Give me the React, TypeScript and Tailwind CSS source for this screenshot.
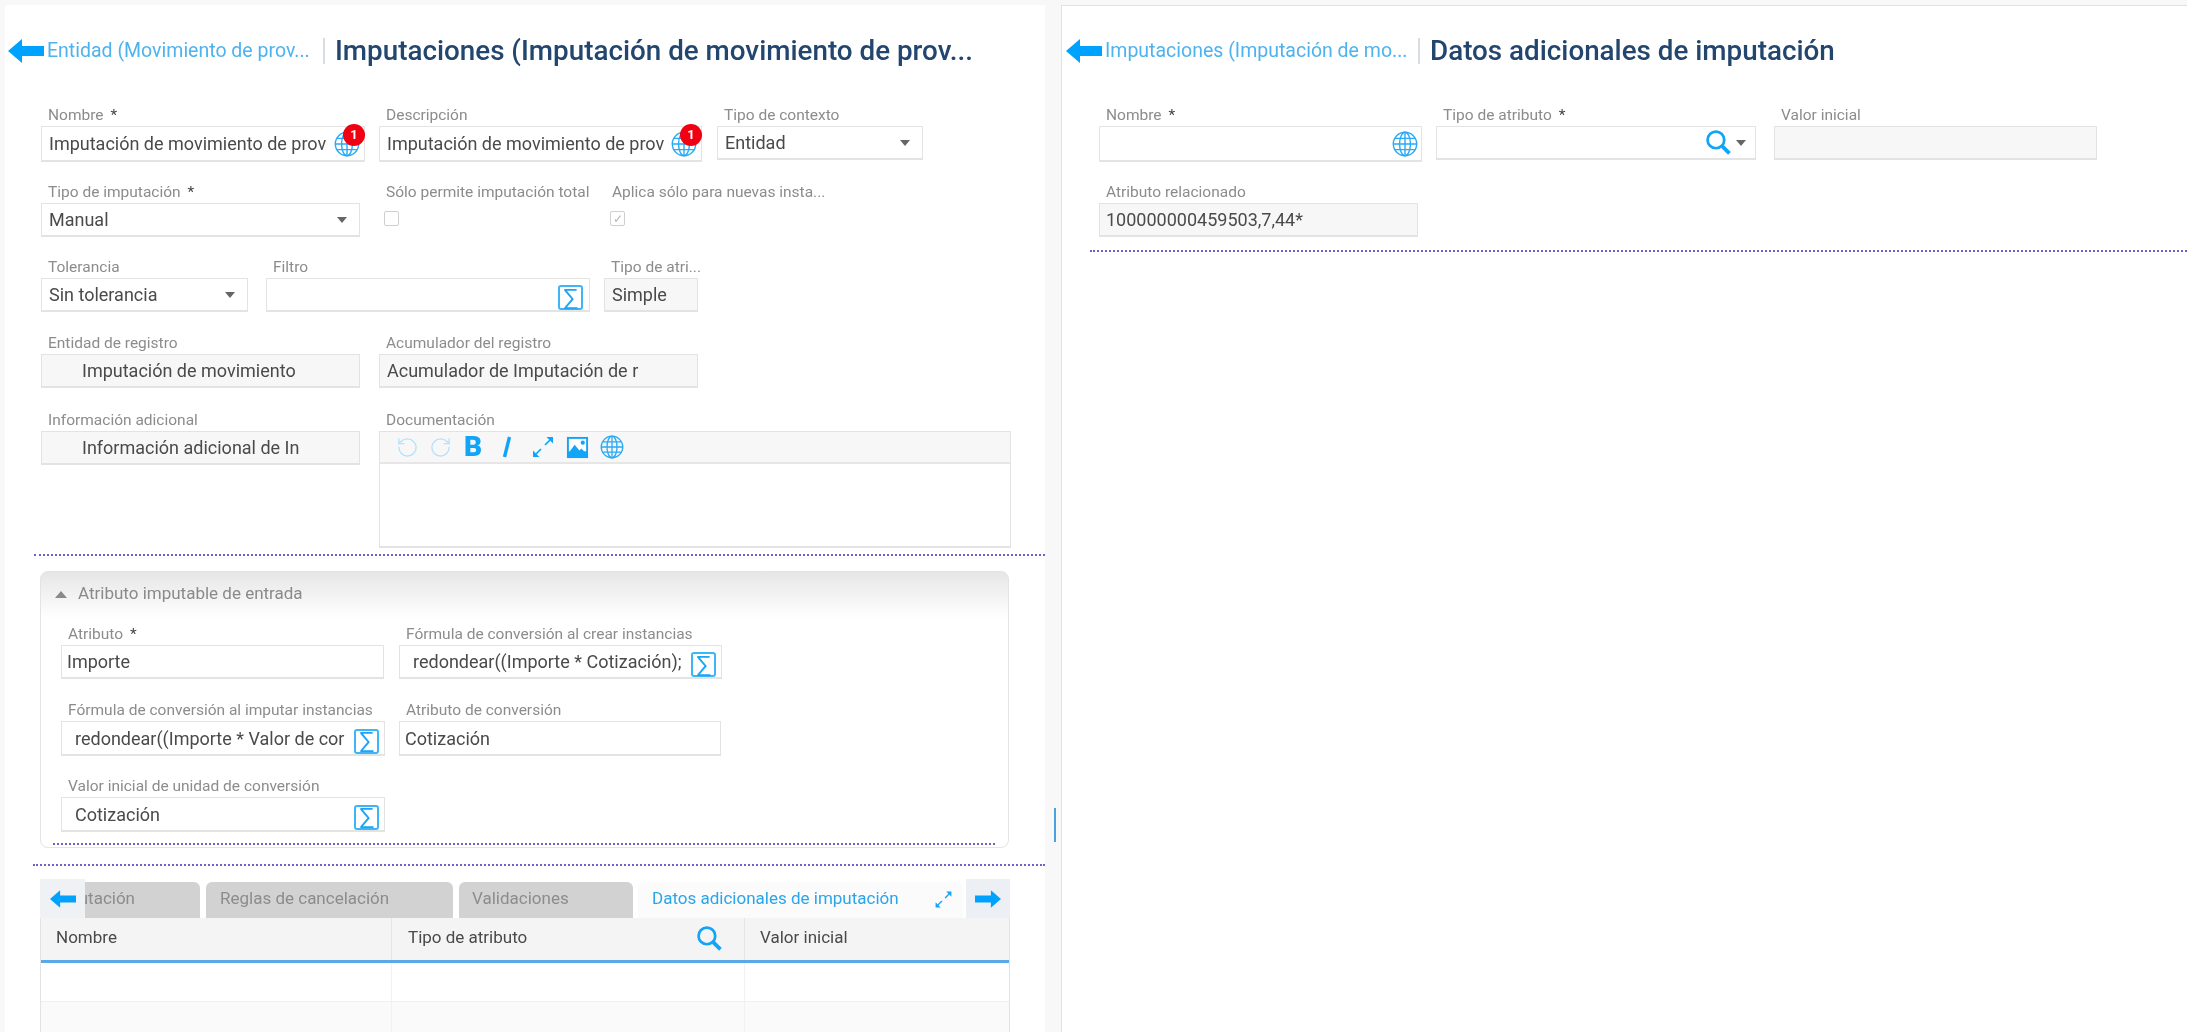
import { RotateCcw, RotateCw } from 'lucide-react';
import type { ReactNode } from 'react';

function BackArrow({ className }: { className: string }) {
  return (
    <svg viewBox="0 0 36 24" className={className} fill="#00a2ff">
      <path d="M0 12 L14 0 V7 H36 V17 H14 V24 Z" />
    </svg>
  );
}

function Globe({ className }: { className: string }) {
  return (
    <svg viewBox="0 0 24 24" className={className} fill="none" stroke="#2aaaf5" strokeWidth="1.3">
      <circle cx="12" cy="12" r="10.8" />
      <ellipse cx="12" cy="12" rx="5" ry="10.8" />
      <path d="M12 1.2 V22.8 M1.2 12 H22.8 M2.8 6.8 H21.2 M2.8 17.2 H21.2" />
    </svg>
  );
}

function Expand({ className }: { className: string }) {
  return (
    <svg viewBox="0 0 24 24" className={className} fill="#12a5f7" stroke="#12a5f7" strokeWidth="1.7">
      <path d="M5 19 L10 14 M14 10 L19 5" fill="none" />
      <path d="M15.5 2 H22 V8.5 Z M2 15.5 V22 H8.5 Z" stroke="none" />
    </svg>
  );
}

function Picture({ className }: { className: string }) {
  return (
    <svg viewBox="0 0 24 24" className={className}>
      <rect x="1" y="1" width="22" height="22" fill="#12a5f7" />
      <rect x="3" y="3" width="18" height="13" fill="#fff" />
      <circle cx="17.5" cy="7" r="2.2" fill="#12a5f7" />
      <path d="M1 20 L9 9 L14 15 L16 13 L23 20 V23 H1 Z" fill="#12a5f7" />
    </svg>
  );
}

function SearchIcon({ className }: { className: string }) {
  return (
    <svg viewBox="0 0 24 24" className={className} fill="none" stroke="#12a5f7">
      <circle cx="9.5" cy="9.5" r="8" strokeWidth="2.6" />
      <path d="M15.5 15.5 L22.5 22.5" strokeWidth="3.6" />
    </svg>
  );
}

function SigmaBtn({ className = '' }: { className?: string }) {
  return (
    <span className={`flex h-[25px] w-[25px] shrink-0 items-center justify-center rounded-[3px] border-2 border-[#3fb4f7] bg-white text-[24px] leading-none text-[#1ba6f5] ${className}`}>
      ∑
    </span>
  );
}

function Badge() {
  return (
    <span className="absolute right-[-1px] top-[-3px] flex h-[22px] w-[22px] items-center justify-center rounded-full bg-[#f00010] text-[13px] font-bold text-white">
      1
    </span>
  );
}

function Caret() {
  return <span className="h-0 w-0 border-x-[5px] border-t-[6px] border-x-transparent border-t-[#666]" />;
}

interface FieldProps {
  label: string;
  required?: boolean;
  width: string;
  boxClass?: string;
  readOnly?: boolean;
  textClass?: string;
  value?: string;
  children?: ReactNode;
}

function Field({ label, required, width, boxClass = 'h-[34px]', readOnly, textClass = 'pl-[7px]', value, children }: FieldProps) {
  return (
    <div className={`${width} shrink-0`}>
      <div className="h-[21px] whitespace-nowrap pl-[7px] text-[15.5px] leading-[20px] text-[#8c8c8c]">
        {label}
        {required && <span className="ml-[7px] text-[#444]">*</span>}
      </div>
      <div className={`relative flex items-center border border-[#e3e3e3] border-b-2 ${readOnly ? 'bg-[#f7f7f7]' : 'bg-white'} ${boxClass}`}>
        <div className={`min-w-0 flex-1 overflow-hidden whitespace-nowrap text-[18px] text-[#4a4a4a] ${textClass}`}>{value}</div>
        {children}
      </div>
    </div>
  );
}

function Select(props: FieldProps) {
  return (
    <Field {...props}>
      <span className="mr-[12px] flex shrink-0">
        <Caret />
      </span>
    </Field>
  );
}

function CheckField({ label, width, checked }: { label: string; width: string; checked?: boolean }) {
  return (
    <div className={`${width} shrink-0`}>
      <div className="h-[21px] whitespace-nowrap pl-[7px] text-[15.5px] leading-[20px] text-[#8c8c8c]">{label}</div>
      <div className="ml-[5px] mt-[8px] flex h-[15px] w-[15px] items-center justify-center rounded-[2px] border border-[#cfcfcf] bg-white text-[12px] leading-none text-[#b5b5b5]">
        {checked ? '✓' : ''}
      </div>
    </div>
  );
}

function PageHeader({ link, title, linkWidth }: { link: string; title: string; linkWidth: string }) {
  return (
    <div className="flex h-[40px] items-center">
      <BackArrow className="h-[24px] w-[36px] shrink-0" />
      <span className={`ml-[3px] whitespace-nowrap text-[19.5px] text-[#4db2ee] ${linkWidth}`}>{link}</span>
      <span className="mx-[10px] h-[26px] w-[2px] shrink-0 bg-[#d8dde3]" />
      <span className="whitespace-nowrap text-[27.8px] font-medium text-[#22466e]">{title}</span>
    </div>
  );
}

const dotted = 'h-0 border-t-[2px] border-dotted border-[#6a62c4]';

export default function App() {
  return (
    <div className="flex h-[1032px] w-[2187px] overflow-hidden bg-[#f8f8f8] pt-[5px] font-['Roboto',sans-serif] blur-[0.4px]">
      {/* Panel izquierdo */}
      <div className="ml-[5px] h-full w-[1040px] shrink-0 bg-white">
        <div className="mt-[26px] pl-[3px]">
          <PageHeader link="Entidad (Movimiento de prov..." title="Imputaciones (Imputación de movimiento de prov..." linkWidth="w-[266px]" />
        </div>

        <div className="mt-[34px] pl-[36px]">
          <div className="flex">
            <Field label="Nombre" required width="w-[324px]" boxClass="h-[36px]" value="Imputación de movimiento de prov">
              <Globe className="mr-[4px] h-[26px] w-[26px] shrink-0" />
              <Badge />
            </Field>
            <Field label="Descripción" width="ml-[14px] w-[323px]" boxClass="h-[36px]" value="Imputación de movimiento de prov">
              <Globe className="mr-[4px] h-[26px] w-[26px] shrink-0" />
              <Badge />
            </Field>
            <Select label="Tipo de contexto" width="ml-[15px] w-[206px]" value="Entidad" />
          </div>

          <div className="mt-[20px] flex">
            <Select label="Tipo de imputación" required width="w-[319px]" value="Manual" />
            <CheckField label="Sólo permite imputación total" width="ml-[19px] w-[226px]" />
            <CheckField label="Aplica sólo para nuevas insta..." width="w-[222px]" checked />
          </div>

          <div className="mt-[20px] flex">
            <Select label="Tolerancia" width="w-[207px]" value="Sin tolerancia" />
            <Field label="Filtro" width="ml-[18px] w-[324px]">
              <SigmaBtn className="mr-[6px] mt-[6px]" />
            </Field>
            <Field label="Tipo de atri..." width="ml-[14px] w-[94px]" readOnly value="Simple" />
          </div>

          <div className="mt-[21px] flex">
            <Field label="Entidad de registro" width="w-[319px]" readOnly textClass="pl-[40px] pr-[40px]" value="Imputación de movimiento" />
            <Field label="Acumulador del registro" width="ml-[19px] w-[319px]" readOnly textClass="pl-[7px] pr-[40px]" value="Acumulador de Imputación de r" />
          </div>

          <div className="mt-[22px] flex">
            <Field label="Información adicional" width="w-[319px]" readOnly textClass="pl-[40px] pr-[40px]" value="Información adicional de In" />
            <div className="ml-[19px] w-[632px] shrink-0">
              <div className="h-[21px] pl-[7px] text-[15.5px] leading-[20px] text-[#8c8c8c]">Documentación</div>
              <div className="h-[117px] border border-[#e3e3e3] border-b-2 bg-white">
                <div className="flex h-[32px] items-center border-b-2 border-[#e6e6e6] bg-[#f7f7f7] pl-[16px]">
                  <RotateCcw size={23} strokeWidth={1.4} className="text-[#b5e1fb]" />
                  <RotateCw size={23} strokeWidth={1.4} className="ml-[10px] text-[#b5e1fb]" />
                  <span className="ml-[12px] w-[20px] text-[28px] font-black leading-none text-[#12a5f7]">B</span>
                  <svg viewBox="0 0 10 22" className="ml-[18px] h-[22px] w-[10px]" stroke="#12a5f7" strokeWidth="3.4">
                    <path d="M7.5 1 L2.5 21" />
                  </svg>
                  <Expand className="ml-[19px] h-[24px] w-[24px]" />
                  <Picture className="ml-[11px] h-[23px] w-[23px]" />
                  <Globe className="ml-[11px] h-[24px] w-[24px]" />
                </div>
              </div>
            </div>
          </div>
        </div>

        <div className={`ml-[29px] mt-[6px] ${dotted}`} />

        {/* Atributo imputable de entrada */}
        <div className="ml-[35px] mt-[15px] h-[277px] w-[969px] rounded-[8px] border border-[#e4e4e4] bg-[linear-gradient(#e6e6e6,#ffffff_46px)] pl-[20px]">
          <div className="flex h-[44px] items-center">
            <span className="ml-[-6px] h-0 w-0 border-x-[6px] border-b-[7px] border-x-transparent border-b-[#8a8a8a]" />
            <span className="ml-[11px] text-[17px] text-[#8a8a8a]">Atributo imputable de entrada</span>
          </div>
          <div className="mt-[8px] flex">
            <Field label="Atributo" required width="w-[323px]" value="Importe" textClass="pl-[5px]" />
            <Field label="Fórmula de conversión al crear instancias" width="ml-[15px] w-[323px]" textClass="pl-[13px]" value="redondear((Importe * Cotización);">
              <SigmaBtn className="mr-[5px] mt-[6px]" />
            </Field>
          </div>
          <div className="mt-[21px] flex">
            <Field label="Fórmula de conversión al imputar instancias" width="w-[324px]" boxClass="h-[35px]" textClass="pl-[13px]" value="redondear((Importe * Valor de cor">
              <SigmaBtn className="ml-[6px] mr-[5px] mt-[6px]" />
            </Field>
            <Field label="Atributo de conversión" width="ml-[14px] w-[322px]" boxClass="h-[35px]" textClass="pl-[5px]" value="Cotización" />
          </div>
          <div className="mt-[20px] flex">
            <Field label="Valor inicial de unidad de conversión" width="w-[324px]" boxClass="h-[35px]" textClass="pl-[13px]" value="Cotización">
              <SigmaBtn className="mr-[5px] mt-[6px]" />
            </Field>
          </div>
          <div className={`ml-[-8px] mt-[11px] w-[942px] ${dotted}`} />
        </div>

        <div className={`ml-[28px] mt-[16px] ${dotted}`} />

        {/* Pestañas */}
        <div className="ml-[35px] mt-[13px] w-[970px]">
          <div className="flex h-[39px] items-end">
            <div className="flex h-full w-[45px] items-center justify-center bg-[#eff1f4]">
              <BackArrow className="h-[20px] w-[26px]" />
            </div>
            <div className="flex h-[36px] w-[115px] items-center justify-end overflow-hidden whitespace-nowrap rounded-tr-[6px] bg-[#d2d2d2] pb-[2px] pr-[65px] text-[17px] text-[#8c8c8c]">
              Imputación
            </div>
            <div className="ml-[6px] flex h-[36px] w-[247px] items-center rounded-t-[6px] bg-[#d2d2d2] pb-[2px] pl-[14px] text-[17px] text-[#8c8c8c]">
              Reglas de cancelación
            </div>
            <div className="ml-[6px] flex h-[36px] w-[174px] items-center rounded-t-[6px] bg-[#d2d2d2] pb-[2px] pl-[13px] text-[17px] text-[#8c8c8c]">
              Validaciones
            </div>
            <div className="ml-[5px] flex h-[36px] w-[325px] items-center rounded-t-[6px] bg-[#fbfbfb] pb-[2px] pl-[14px] text-[17px] text-[#2aa5ea]">
              <span className="flex-1">Datos adicionales de imputación</span>
              <Expand className="mr-[10px] h-[19px] w-[19px]" />
            </div>
            <div className="ml-[3px] flex h-full w-[44px] items-center justify-center bg-[#eceff3]">
              <BackArrow className="h-[20px] w-[26px] rotate-180" />
            </div>
          </div>

          <div className="border-x border-[#e3e3e3]">
            <div className="flex h-[45px] border-b-[3px] border-[#5aa9e6] bg-[#f4f4f4] text-[17px] text-[#4a4a4a]">
              <div className="flex w-[351px] items-center border-r border-[#e6e6e6] pb-[2px] pl-[15px]">Nombre</div>
              <div className="flex w-[353px] items-center justify-between border-r border-[#e6e6e6] pb-[2px] pl-[16px] pr-[22px]">
                Tipo de atributo
                <SearchIcon className="h-[25px] w-[25px]" />
              </div>
              <div className="flex flex-1 items-center pb-[2px] pl-[15px]">Valor inicial</div>
            </div>
            <div className="flex h-[39px] border-b border-[#f0f0f0] bg-white">
              <div className="w-[351px] border-r border-[#f2f2f2]" />
              <div className="w-[353px] border-r border-[#f2f2f2]" />
            </div>
            <div className="flex h-[39px] bg-[#fafafa]">
              <div className="w-[351px] border-r border-[#f2f2f2]" />
              <div className="w-[353px] border-r border-[#f2f2f2]" />
            </div>
          </div>
        </div>
      </div>

      {/* Separador */}
      <div className="relative w-[16px] shrink-0">
        <span className="absolute left-[9px] top-[803px] h-[34px] w-[2px] bg-[#4aa3df]" />
      </div>

      {/* Panel derecho */}
      <div className="h-full flex-1 border-l border-t border-[#cfe6f8] bg-white">
        <div className="mt-[25px] pl-[4px]">
          <PageHeader link="Imputaciones (Imputación de mo..." title="Datos adicionales de imputación" linkWidth="w-[303px]" />
        </div>
        <div className="mt-[34px] pl-[37px]">
          <div className="flex">
            <Field label="Nombre" required width="w-[323px]" boxClass="h-[36px]">
              <Globe className="mr-[3px] h-[26px] w-[26px] shrink-0" />
            </Field>
            <Field label="Tipo de atributo" required width="ml-[14px] w-[320px]">
              <SearchIcon className="mr-[5px] h-[25px] w-[25px] shrink-0" />
              <span className="mr-[9px] flex shrink-0">
                <Caret />
              </span>
            </Field>
            <Field label="Valor inicial" width="ml-[18px] w-[323px]" readOnly />
          </div>
          <div className="mt-[20px] flex">
            <Field label="Atributo relacionado" width="w-[319px]" readOnly textClass="pl-[6px]" value="100000000459503,7,44*" />
          </div>
        </div>
        <div className={`ml-[28px] mt-[13px] ${dotted}`} />
      </div>
    </div>
  );
}
